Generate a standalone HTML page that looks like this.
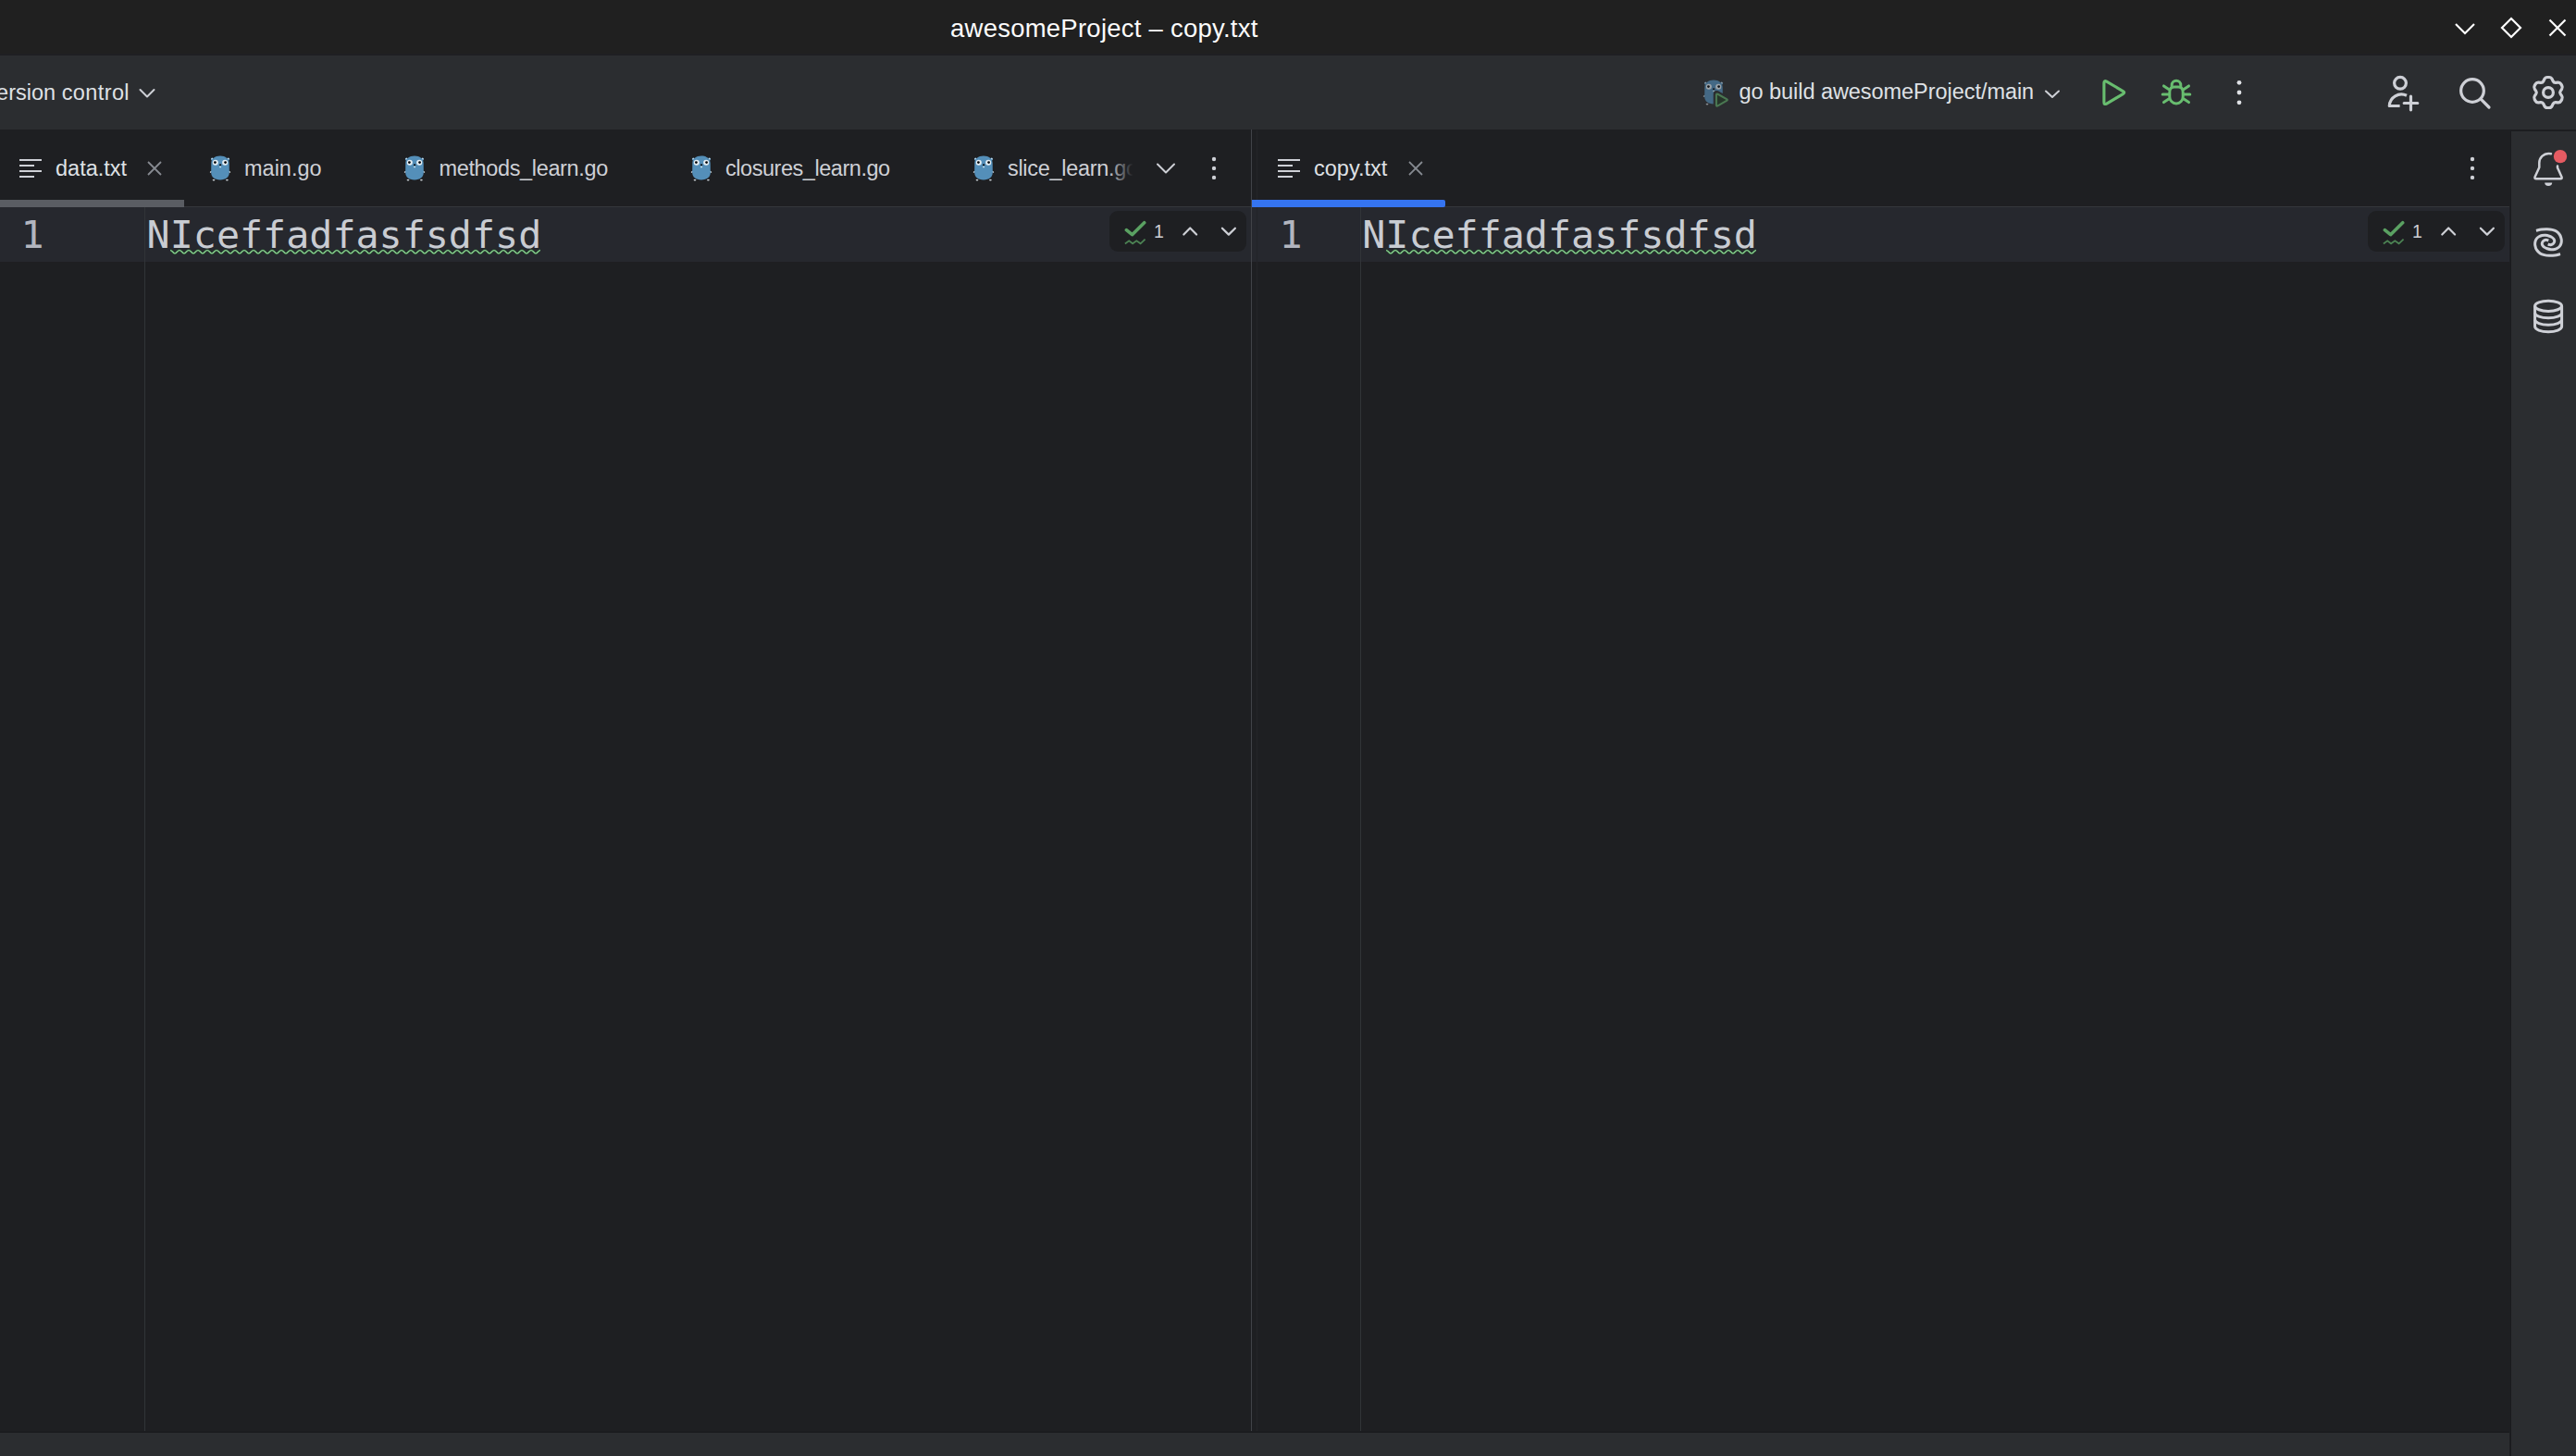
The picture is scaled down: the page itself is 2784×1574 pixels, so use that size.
<!DOCTYPE html>
<html lang="en">
<head>
<meta charset="utf-8">
<title>awesomeProject – copy.txt</title>
<style>
html,body{margin:0;padding:0;background:#1e1f22;}
body{width:2784px;height:1574px;overflow:hidden;background:#1e1f22;position:relative;
  font-family:"Liberation Sans","DejaVu Sans",sans-serif;color:#dfe1e5;}
.abs{position:absolute;}
.t{position:absolute;white-space:pre;line-height:1;}
svg{position:absolute;overflow:visible;}
#title{left:0;top:0;width:2784px;height:58px;background:#202020;}
#titleline{left:0;top:58px;width:2784px;height:2px;background:#1f1f23;}
#toolbar{left:0;top:60px;width:2784px;height:80px;background:#2b2d30;}
#tabline{left:0;top:223px;width:2712px;height:1px;background:#35373b;}
.caret{top:224px;height:59px;background:#26282e;}
#sidebar{left:2714px;top:142px;width:70px;height:1432px;background:#2b2d30;}
#bottom{left:0;top:1549px;width:2712px;height:25px;background:#2b2d30;}
.ui{font-size:23.5px;color:#dfe1e5;}
.tab{font-size:23.5px;color:#ced0d6;}
.code{font-family:"DejaVu Sans Mono","Liberation Mono",monospace;font-size:41.700px;color:#c9ccd2;}
.ln{font-family:"DejaVu Sans Mono","Liberation Mono",monospace;font-size:41.700px;color:#b2b5be;}
.widget{top:228px;width:148px;height:44px;border-radius:9px;background:#1e1f22;}
</style>
</head>
<body>

<!-- window title bar -->
<div id="title" class="abs"></div>
<div id="titleline" class="abs"></div>
<div class="t" id="ttl" style="left:1027px;top:17px;font-size:27.5px;letter-spacing:0.24px;color:#fcfcfc;">awesomeProject – copy.txt</div>
<svg id="winctl" style="left:2640px;top:10px" width="144" height="40" viewBox="2640 10 144 40" fill="none" stroke="#fcfcfc" stroke-width="2.2">
  <path d="M2654 26 L2664 36 L2674 26"/>
  <path d="M2714 20 L2724 30 L2714 40 L2704 30 Z"/>
  <path d="M2755.500 21.500 L2772.500 38.500 M2772.500 21.500 L2755.500 38.500"/>
</svg>

<!-- main toolbar -->
<div id="toolbar" class="abs"></div>
<div class="t ui" id="vc" style="left:-3.900px;top:88.500px;">ersion <span style="letter-spacing:0.4px">control</span></div>
<svg style="left:148px;top:92px" width="24" height="18" viewBox="148 92 24 18" fill="none" stroke="#ced0d6" stroke-width="2" stroke-linecap="round" stroke-linejoin="round">
  <path d="M151.500 97 L159 104.500 L166.500 97"/>
</svg>


<!-- run configuration widget -->
<svg style="left:1840px;top:86px;opacity:0.62" width="24" height="28" viewBox="0 0 24 28"><g><circle cx="3.400" cy="3.900" r="1.500" fill="#5a96c0"/><circle cx="20.600" cy="3.900" r="1.500" fill="#5a96c0"/><circle cx="3.200" cy="3.600" r="0.850" fill="#d5dfe6"/><circle cx="20.800" cy="3.600" r="0.850" fill="#d5dfe6"/><ellipse cx="1.900" cy="17.800" rx="1.250" ry="0.850" transform="rotate(-40 1.900 17.800)" fill="#c3cad0"/><ellipse cx="22.100" cy="17.800" rx="1.250" ry="0.850" transform="rotate(40 22.100 17.800)" fill="#c3cad0"/><ellipse cx="5" cy="26.600" rx="1.350" ry="0.950" fill="#c9cfd4"/><ellipse cx="19.400" cy="26.600" rx="1.350" ry="0.950" fill="#c9cfd4"/><path d="M12 0.600 C6.200 0.600 2.300 3.600 2.300 8.600 L2.200 18.600 C2.200 23.600 6 26.400 12 26.400 C18 26.400 21.800 23.600 21.800 18.600 L21.700 8.600 C21.700 3.600 17.800 0.600 12 0.600 Z" fill="#548fb9"/><circle cx="6.800" cy="7.700" r="3.050" fill="#e4edf3"/><circle cx="17.200" cy="7.700" r="3.050" fill="#e4edf3"/><circle cx="6.400" cy="7.600" r="1.400" fill="#05070a"/><circle cx="17.600" cy="7.600" r="1.400" fill="#05070a"/><ellipse cx="12.100" cy="10.200" rx="1.200" ry="0.950" fill="#0b1118"/><rect x="11.100" y="11.700" width="2" height="1.500" rx="0.600" fill="#cfe6f0"/></g></svg>
<svg style="left:1848px;top:96px" width="24" height="24" viewBox="1848 96 24 24">
  <path d="M1855.200 101.400 L1867.200 108 L1855.200 114.800 Z" fill="#2b2d30" stroke="#2b2d30" stroke-width="7" stroke-linejoin="round"/>
  <path d="M1854.90 102.70 Q1854.90 100.90 1856.47 101.78 L1866.03 107.12 Q1867.60 108.00 1866.03 108.89 L1856.47 114.31 Q1854.90 115.20 1854.90 113.40 Z" fill="#26352a" stroke="#4a7852" stroke-width="2.100" stroke-linejoin="round"/>
</svg>
<div class="t ui" id="runcfg" style="left:1879.500px;top:88px;letter-spacing:-0.05px;">go build awesomeProject/main</div>
<svg style="left:2206px;top:92px" width="24" height="18" viewBox="2206 92 24 18" fill="none" stroke="#ced0d6" stroke-width="2" stroke-linecap="round" stroke-linejoin="round">
  <path d="M2211 98.500 L2218 105 L2225 98.500"/>
</svg>
<!-- run / debug / more -->
<svg style="left:2264px;top:80px" width="40" height="40" viewBox="2264 80 40 40" fill="none" stroke="#68bd6f" stroke-width="3.100" stroke-linejoin="round">
  <path d="M2273.90 89.80 Q2273.90 86.60 2276.70 88.15 L2294.40 98.55 Q2297.10 100.10 2294.40 101.65 L2276.70 112.05 Q2273.90 113.60 2273.90 110.40 Z"/>
</svg>
<svg style="left:2332px;top:80px" width="40" height="40" viewBox="2332 80 40 40" fill="none" stroke="#68bd6f" stroke-width="3" stroke-linecap="round" stroke-linejoin="round">
  <path d="M2344.800 99.500 Q2344.800 94 2350 94 L2354 94 Q2359.200 94 2359.200 99.500 L2359.200 104.700 A7.200 7.200 0 0 1 2344.800 104.700 Z"/>
  <path d="M2347.200 94 L2347.200 92 A4.800 4.800 0 0 1 2356.800 92 L2356.800 94"/>
  <path d="M2338.500 92.900 L2343.800 96.400 M2365.500 92.900 L2360.200 96.400 M2337.200 101.900 L2343.400 101.900 M2366.800 101.900 L2360.600 101.900 M2338.500 110.600 L2343.800 107.100 M2365.500 110.600 L2360.200 107.100"/>
</svg>
<svg style="left:2410px;top:80px" width="20" height="40" viewBox="2410 80 20 40" fill="#dfe1e5">
  <circle cx="2420" cy="89.300" r="2.400"/><circle cx="2420" cy="100" r="2.400"/><circle cx="2420" cy="110.800" r="2.400"/>
</svg>
<!-- code with me / search / settings -->
<svg style="left:2574px;top:78px" width="48" height="48" viewBox="2574 78 48 48" fill="none" stroke="#ced0d6" stroke-width="3.200" stroke-linecap="round" stroke-linejoin="round">
  <circle cx="2594" cy="89.800" r="6.400"/>
  <path d="M2601 103.300 A13.100 13.100 0 0 0 2582.300 114.500 L2593.600 114.500" stroke-linecap="butt"/>
  <path d="M2598.200 111.500 L2612.800 111.500 M2605.500 104.200 L2605.500 118.800"/>
</svg>
<svg style="left:2650px;top:78px" width="48" height="48" viewBox="2650 78 48 48" fill="none" stroke="#ced0d6" stroke-width="3.200" stroke-linecap="round">
  <circle cx="2672" cy="98" r="12.350"/>
  <path d="M2681.200 107.200 L2690 116"/>
</svg>
<svg style="left:2730px;top:76px" width="48" height="48" viewBox="-24 -24 48 48" fill="none" stroke="#ced0d6" stroke-width="3.200" stroke-linejoin="round">
  <path d="M-4.15 -14.50 Q-3.21 -16.49 -1.01 -16.49 L1.01 -16.49 Q3.21 -16.49 4.15 -14.50 L5.19 -12.29 Q6.05 -10.48 8.04 -10.64 L10.49 -10.84 Q12.68 -11.02 13.78 -9.12 L14.78 -7.37 Q15.88 -5.47 14.63 -3.66 L13.24 -1.64 Q12.10 0.00 13.24 1.64 L14.63 3.66 Q15.88 5.47 14.78 7.37 L13.78 9.12 Q12.68 11.02 10.49 10.84 L8.04 10.64 Q6.05 10.48 5.19 12.29 L4.15 14.50 Q3.21 16.49 1.01 16.49 L-1.01 16.49 Q-3.21 16.49 -4.15 14.50 L-5.19 12.29 Q-6.05 10.48 -8.04 10.64 L-10.49 10.84 Q-12.68 11.02 -13.78 9.12 L-14.78 7.37 Q-15.88 5.47 -14.63 3.66 L-13.24 1.64 Q-12.10 0.00 -13.24 -1.64 L-14.63 -3.66 Q-15.88 -5.47 -14.78 -7.37 L-13.78 -9.12 Q-12.68 -11.02 -10.49 -10.84 L-8.04 -10.64 Q-6.05 -10.48 -5.19 -12.29 Z"/>
  <circle cx="0" cy="0" r="5.400"/>
</svg>

<!-- editor area -->
<div class="abs caret" style="left:0;width:1352px;"></div>
<div class="abs caret" style="left:1353px;width:1359px;"></div>
<div id="tabline" class="abs"></div>


<!-- left editor tabs -->
<svg style="left:21px;top:172px" width="24" height="20" viewBox="0 0 24 20"><g fill="#ced0d6"><rect x="0" y="0" width="24" height="2"/><rect x="0" y="6" width="16" height="2"/><rect x="0" y="12" width="24" height="2"/><rect x="0" y="18" width="16" height="2"/></g></svg>
<div class="t tab" id="tab1" style="left:60px;top:171px;color:#dfe1e5;">data.txt</div>
<svg style="left:160px;top:175px" width="14" height="14" viewBox="0 0 14 14"><g fill="none" stroke="#868a91" stroke-width="1.800"><path d="M0 0 L14 14 M14 0 L0 14"/></g></svg>
<div class="abs" style="left:0;top:216px;width:199px;height:8px;background:#5a5d63;"></div>

<svg style="left:226px;top:168px" width="24" height="28" viewBox="0 0 24 28"><g><circle cx="3.400" cy="3.900" r="1.500" fill="#5a96c0"/><circle cx="20.600" cy="3.900" r="1.500" fill="#5a96c0"/><circle cx="3.200" cy="3.600" r="0.850" fill="#d5dfe6"/><circle cx="20.800" cy="3.600" r="0.850" fill="#d5dfe6"/><ellipse cx="1.900" cy="17.800" rx="1.250" ry="0.850" transform="rotate(-40 1.900 17.800)" fill="#c3cad0"/><ellipse cx="22.100" cy="17.800" rx="1.250" ry="0.850" transform="rotate(40 22.100 17.800)" fill="#c3cad0"/><ellipse cx="5" cy="26.600" rx="1.350" ry="0.950" fill="#c9cfd4"/><ellipse cx="19.400" cy="26.600" rx="1.350" ry="0.950" fill="#c9cfd4"/><path d="M12 0.600 C6.200 0.600 2.300 3.600 2.300 8.600 L2.200 18.600 C2.200 23.600 6 26.400 12 26.400 C18 26.400 21.800 23.600 21.800 18.600 L21.700 8.600 C21.700 3.600 17.800 0.600 12 0.600 Z" fill="#548fb9"/><circle cx="6.800" cy="7.700" r="3.050" fill="#e4edf3"/><circle cx="17.200" cy="7.700" r="3.050" fill="#e4edf3"/><circle cx="6.400" cy="7.600" r="1.400" fill="#05070a"/><circle cx="17.600" cy="7.600" r="1.400" fill="#05070a"/><ellipse cx="12.100" cy="10.200" rx="1.200" ry="0.950" fill="#0b1118"/><rect x="11.100" y="11.700" width="2" height="1.500" rx="0.600" fill="#cfe6f0"/></g></svg>
<div class="t tab" id="tab2" style="left:264px;top:171px;">main.go</div>
<svg style="left:436px;top:168px" width="24" height="28" viewBox="0 0 24 28"><g><circle cx="3.400" cy="3.900" r="1.500" fill="#5a96c0"/><circle cx="20.600" cy="3.900" r="1.500" fill="#5a96c0"/><circle cx="3.200" cy="3.600" r="0.850" fill="#d5dfe6"/><circle cx="20.800" cy="3.600" r="0.850" fill="#d5dfe6"/><ellipse cx="1.900" cy="17.800" rx="1.250" ry="0.850" transform="rotate(-40 1.900 17.800)" fill="#c3cad0"/><ellipse cx="22.100" cy="17.800" rx="1.250" ry="0.850" transform="rotate(40 22.100 17.800)" fill="#c3cad0"/><ellipse cx="5" cy="26.600" rx="1.350" ry="0.950" fill="#c9cfd4"/><ellipse cx="19.400" cy="26.600" rx="1.350" ry="0.950" fill="#c9cfd4"/><path d="M12 0.600 C6.200 0.600 2.300 3.600 2.300 8.600 L2.200 18.600 C2.200 23.600 6 26.400 12 26.400 C18 26.400 21.800 23.600 21.800 18.600 L21.700 8.600 C21.700 3.600 17.800 0.600 12 0.600 Z" fill="#548fb9"/><circle cx="6.800" cy="7.700" r="3.050" fill="#e4edf3"/><circle cx="17.200" cy="7.700" r="3.050" fill="#e4edf3"/><circle cx="6.400" cy="7.600" r="1.400" fill="#05070a"/><circle cx="17.600" cy="7.600" r="1.400" fill="#05070a"/><ellipse cx="12.100" cy="10.200" rx="1.200" ry="0.950" fill="#0b1118"/><rect x="11.100" y="11.700" width="2" height="1.500" rx="0.600" fill="#cfe6f0"/></g></svg>
<div class="t tab" id="tab3" style="left:474.500px;top:171px;letter-spacing:-0.36px;">methods_learn.go</div>
<svg style="left:746px;top:168px" width="24" height="28" viewBox="0 0 24 28"><g><circle cx="3.400" cy="3.900" r="1.500" fill="#5a96c0"/><circle cx="20.600" cy="3.900" r="1.500" fill="#5a96c0"/><circle cx="3.200" cy="3.600" r="0.850" fill="#d5dfe6"/><circle cx="20.800" cy="3.600" r="0.850" fill="#d5dfe6"/><ellipse cx="1.900" cy="17.800" rx="1.250" ry="0.850" transform="rotate(-40 1.900 17.800)" fill="#c3cad0"/><ellipse cx="22.100" cy="17.800" rx="1.250" ry="0.850" transform="rotate(40 22.100 17.800)" fill="#c3cad0"/><ellipse cx="5" cy="26.600" rx="1.350" ry="0.950" fill="#c9cfd4"/><ellipse cx="19.400" cy="26.600" rx="1.350" ry="0.950" fill="#c9cfd4"/><path d="M12 0.600 C6.200 0.600 2.300 3.600 2.300 8.600 L2.200 18.600 C2.200 23.600 6 26.400 12 26.400 C18 26.400 21.800 23.600 21.800 18.600 L21.700 8.600 C21.700 3.600 17.800 0.600 12 0.600 Z" fill="#548fb9"/><circle cx="6.800" cy="7.700" r="3.050" fill="#e4edf3"/><circle cx="17.200" cy="7.700" r="3.050" fill="#e4edf3"/><circle cx="6.400" cy="7.600" r="1.400" fill="#05070a"/><circle cx="17.600" cy="7.600" r="1.400" fill="#05070a"/><ellipse cx="12.100" cy="10.200" rx="1.200" ry="0.950" fill="#0b1118"/><rect x="11.100" y="11.700" width="2" height="1.500" rx="0.600" fill="#cfe6f0"/></g></svg>
<div class="t tab" id="tab4" style="left:784px;top:171px;letter-spacing:-0.46px;">closures_learn.go</div>
<svg style="left:1051px;top:168px" width="24" height="28" viewBox="0 0 24 28"><g><circle cx="3.400" cy="3.900" r="1.500" fill="#5a96c0"/><circle cx="20.600" cy="3.900" r="1.500" fill="#5a96c0"/><circle cx="3.200" cy="3.600" r="0.850" fill="#d5dfe6"/><circle cx="20.800" cy="3.600" r="0.850" fill="#d5dfe6"/><ellipse cx="1.900" cy="17.800" rx="1.250" ry="0.850" transform="rotate(-40 1.900 17.800)" fill="#c3cad0"/><ellipse cx="22.100" cy="17.800" rx="1.250" ry="0.850" transform="rotate(40 22.100 17.800)" fill="#c3cad0"/><ellipse cx="5" cy="26.600" rx="1.350" ry="0.950" fill="#c9cfd4"/><ellipse cx="19.400" cy="26.600" rx="1.350" ry="0.950" fill="#c9cfd4"/><path d="M12 0.600 C6.200 0.600 2.300 3.600 2.300 8.600 L2.200 18.600 C2.200 23.600 6 26.400 12 26.400 C18 26.400 21.800 23.600 21.800 18.600 L21.700 8.600 C21.700 3.600 17.800 0.600 12 0.600 Z" fill="#548fb9"/><circle cx="6.800" cy="7.700" r="3.050" fill="#e4edf3"/><circle cx="17.200" cy="7.700" r="3.050" fill="#e4edf3"/><circle cx="6.400" cy="7.600" r="1.400" fill="#05070a"/><circle cx="17.600" cy="7.600" r="1.400" fill="#05070a"/><ellipse cx="12.100" cy="10.200" rx="1.200" ry="0.950" fill="#0b1118"/><rect x="11.100" y="11.700" width="2" height="1.500" rx="0.600" fill="#cfe6f0"/></g></svg>
<div class="t tab" id="tab5" style="left:1089px;top:171px;letter-spacing:-0.3px;">slice_learn.go</div>
<div class="abs" style="left:1198px;top:160px;width:28px;height:50px;background:linear-gradient(to right,rgba(30,31,34,0),#1e1f22 95%);"></div>
<div class="abs" style="left:1224px;top:150px;width:128px;height:70px;background:#1e1f22;"></div>
<svg style="left:1246px;top:172px" width="28" height="20" viewBox="1246 172 28 20" fill="none" stroke="#ced0d6" stroke-width="2" stroke-linecap="round" stroke-linejoin="round">
  <path d="M1251 177.500 L1260 186.500 L1269 177.500"/>
</svg>
<svg style="left:1311.800px;top:172.200px" width="6" height="24" viewBox="0 0 6 24"><g fill="#ced0d6"><circle cx="0" cy="0" r="2.200"/><circle cx="0" cy="9.900" r="2.200"/><circle cx="0" cy="19.900" r="2.200"/></g></svg>

<!-- split divider -->
<div class="abs" style="left:1352px;top:140px;width:1px;height:1407px;background:#414348;"></div>
<div class="abs" style="left:1358px;top:141px;width:1px;height:1406px;background:#232428;"></div>

<!-- right editor tabs -->
<svg style="left:1381px;top:172px" width="24" height="20" viewBox="0 0 24 20"><g fill="#ced0d6"><rect x="0" y="0" width="24" height="2"/><rect x="0" y="6" width="16" height="2"/><rect x="0" y="12" width="24" height="2"/><rect x="0" y="18" width="16" height="2"/></g></svg>
<div class="t tab" id="tab6" style="left:1420px;top:171px;color:#dfe1e5;">copy.txt</div>
<svg style="left:1523px;top:175px" width="14" height="14" viewBox="0 0 14 14"><g fill="none" stroke="#868a91" stroke-width="1.800"><path d="M0 0 L14 14 M14 0 L0 14"/></g></svg>
<div class="abs" style="left:1353px;top:216px;width:209px;height:8px;background:#3574f0;border-radius:0 2px 2px 0;"></div>
<svg style="left:2672px;top:172.200px" width="6" height="24" viewBox="0 0 6 24"><g fill="#ced0d6"><circle cx="0" cy="0" r="2.200"/><circle cx="0" cy="9.900" r="2.200"/><circle cx="0" cy="19.900" r="2.200"/></g></svg>

<!-- left editor -->
<div class="abs" style="left:156px;top:224px;width:1px;height:1325px;background:#313438;"></div>
<div class="t ln" id="ln1" style="left:22.400px;top:233.200px;">1</div>
<div class="t code" id="code1" style="left:158.600px;top:233.200px;">NIceffadfasfsdfsd</div>
<svg class="sq" style="left:184px;top:268px" width="399.500" height="8" viewBox="0 0 399.500 8" fill="none" stroke="#8cd493" stroke-width="1.350"><path d="M0 2.6q1.2 0 2.6 1.6q1.4 2.1 2.4 1.6q1 .5 2.4-1.6q1.4-1.6 2.6-1.6q1.2 0 2.6 1.6q1.4 2.1 2.4 1.6q1 .5 2.4-1.6q1.4-1.6 2.6-1.6q1.2 0 2.6 1.6q1.4 2.1 2.4 1.6q1 .5 2.4-1.6q1.4-1.6 2.6-1.6q1.2 0 2.6 1.6q1.4 2.1 2.4 1.6q1 .5 2.4-1.6q1.4-1.6 2.6-1.6q1.2 0 2.6 1.6q1.4 2.1 2.4 1.6q1 .5 2.4-1.6q1.4-1.6 2.6-1.6q1.2 0 2.6 1.6q1.4 2.1 2.4 1.6q1 .5 2.4-1.6q1.4-1.6 2.6-1.6q1.2 0 2.6 1.6q1.4 2.1 2.4 1.6q1 .5 2.4-1.6q1.4-1.6 2.6-1.6q1.2 0 2.6 1.6q1.4 2.1 2.4 1.6q1 .5 2.4-1.6q1.4-1.6 2.6-1.6q1.2 0 2.6 1.6q1.4 2.1 2.4 1.6q1 .5 2.4-1.6q1.4-1.6 2.6-1.6q1.2 0 2.6 1.6q1.4 2.1 2.4 1.6q1 .5 2.4-1.6q1.4-1.6 2.6-1.6q1.2 0 2.6 1.6q1.4 2.1 2.4 1.6q1 .5 2.4-1.6q1.4-1.6 2.6-1.6q1.2 0 2.6 1.6q1.4 2.1 2.4 1.6q1 .5 2.4-1.6q1.4-1.6 2.6-1.6q1.2 0 2.6 1.6q1.4 2.1 2.4 1.6q1 .5 2.4-1.6q1.4-1.6 2.6-1.6q1.2 0 2.6 1.6q1.4 2.1 2.4 1.6q1 .5 2.4-1.6q1.4-1.6 2.6-1.6q1.2 0 2.6 1.6q1.4 2.1 2.4 1.6q1 .5 2.4-1.6q1.4-1.6 2.6-1.6q1.2 0 2.6 1.6q1.4 2.1 2.4 1.6q1 .5 2.4-1.6q1.4-1.6 2.6-1.6q1.2 0 2.6 1.6q1.4 2.1 2.4 1.6q1 .5 2.4-1.6q1.4-1.6 2.6-1.6q1.2 0 2.6 1.6q1.4 2.1 2.4 1.6q1 .5 2.4-1.6q1.4-1.6 2.6-1.6q1.2 0 2.6 1.6q1.4 2.1 2.4 1.6q1 .5 2.4-1.6q1.4-1.6 2.6-1.6q1.2 0 2.6 1.6q1.4 2.1 2.4 1.6q1 .5 2.4-1.6q1.4-1.6 2.6-1.6q1.2 0 2.6 1.6q1.4 2.1 2.4 1.6q1 .5 2.4-1.6q1.4-1.6 2.6-1.6q1.2 0 2.6 1.6q1.4 2.1 2.4 1.6q1 .5 2.4-1.6q1.4-1.6 2.6-1.6q1.2 0 2.6 1.6q1.4 2.1 2.4 1.6q1 .5 2.4-1.6q1.4-1.6 2.6-1.6q1.2 0 2.6 1.6q1.4 2.1 2.4 1.6q1 .5 2.4-1.6q1.4-1.6 2.6-1.6q1.2 0 2.6 1.6q1.4 2.1 2.4 1.6q1 .5 2.4-1.6q1.4-1.6 2.6-1.6q1.2 0 2.6 1.6q1.4 2.1 2.4 1.6q1 .5 2.4-1.6q1.4-1.6 2.6-1.6q1.2 0 2.6 1.6q1.4 2.1 2.4 1.6q1 .5 2.4-1.6q1.4-1.6 2.6-1.6q1.2 0 2.6 1.6q1.4 2.1 2.4 1.6q1 .5 2.4-1.6q1.4-1.6 2.6-1.6q1.2 0 2.6 1.6q1.4 2.1 2.4 1.6q1 .5 2.4-1.6q1.4-1.6 2.6-1.6q1.2 0 2.6 1.6q1.4 2.1 2.4 1.6q1 .5 2.4-1.6q1.4-1.6 2.6-1.6q1.2 0 2.6 1.6q1.4 2.1 2.4 1.6q1 .5 2.4-1.6q1.4-1.6 2.6-1.6q1.2 0 2.6 1.6q1.4 2.1 2.4 1.6q1 .5 2.4-1.6q1.4-1.6 2.6-1.6q1.2 0 2.6 1.6q1.4 2.1 2.4 1.6q1 .5 2.4-1.6q1.4-1.6 2.6-1.6q1.2 0 2.6 1.6q1.4 2.1 2.4 1.6q1 .5 2.4-1.6q1.4-1.6 2.6-1.6q1.2 0 2.6 1.6q1.4 2.1 2.4 1.6q1 .5 2.4-1.6q1.4-1.6 2.6-1.6q1.2 0 2.6 1.6q1.4 2.1 2.4 1.6q1 .5 2.4-1.6q1.4-1.6 2.6-1.6q1.2 0 2.6 1.6q1.4 2.1 2.4 1.6q1 .5 2.4-1.6q1.4-1.6 2.6-1.6q1.2 0 2.6 1.6q1.4 2.1 2.4 1.6q1 .5 2.4-1.6q1.4-1.6 2.6-1.6q1.2 0 2.6 1.6q1.4 2.1 2.4 1.6q1 .5 2.4-1.6q1.4-1.6 2.6-1.6q1.2 0 2.6 1.6q1.4 2.1 2.4 1.6q1 .5 2.4-1.6q1.4-1.6 2.6-1.6" stroke="#245a2e" stroke-width="2.700" opacity="0.550"/><path d="M0 2.6q1.2 0 2.6 1.6q1.4 2.1 2.4 1.6q1 .5 2.4-1.6q1.4-1.6 2.6-1.6q1.2 0 2.6 1.6q1.4 2.1 2.4 1.6q1 .5 2.4-1.6q1.4-1.6 2.6-1.6q1.2 0 2.6 1.6q1.4 2.1 2.4 1.6q1 .5 2.4-1.6q1.4-1.6 2.6-1.6q1.2 0 2.6 1.6q1.4 2.1 2.4 1.6q1 .5 2.4-1.6q1.4-1.6 2.6-1.6q1.2 0 2.6 1.6q1.4 2.1 2.4 1.6q1 .5 2.4-1.6q1.4-1.6 2.6-1.6q1.2 0 2.6 1.6q1.4 2.1 2.4 1.6q1 .5 2.4-1.6q1.4-1.6 2.6-1.6q1.2 0 2.6 1.6q1.4 2.1 2.4 1.6q1 .5 2.4-1.6q1.4-1.6 2.6-1.6q1.2 0 2.6 1.6q1.4 2.1 2.4 1.6q1 .5 2.4-1.6q1.4-1.6 2.6-1.6q1.2 0 2.6 1.6q1.4 2.1 2.4 1.6q1 .5 2.4-1.6q1.4-1.6 2.6-1.6q1.2 0 2.6 1.6q1.4 2.1 2.4 1.6q1 .5 2.4-1.6q1.4-1.6 2.6-1.6q1.2 0 2.6 1.6q1.4 2.1 2.4 1.6q1 .5 2.4-1.6q1.4-1.6 2.6-1.6q1.2 0 2.6 1.6q1.4 2.1 2.4 1.6q1 .5 2.4-1.6q1.4-1.6 2.6-1.6q1.2 0 2.6 1.6q1.4 2.1 2.4 1.6q1 .5 2.4-1.6q1.4-1.6 2.6-1.6q1.2 0 2.6 1.6q1.4 2.1 2.4 1.6q1 .5 2.4-1.6q1.4-1.6 2.6-1.6q1.2 0 2.6 1.6q1.4 2.1 2.4 1.6q1 .5 2.4-1.6q1.4-1.6 2.6-1.6q1.2 0 2.6 1.6q1.4 2.1 2.4 1.6q1 .5 2.4-1.6q1.4-1.6 2.6-1.6q1.2 0 2.6 1.6q1.4 2.1 2.4 1.6q1 .5 2.4-1.6q1.4-1.6 2.6-1.6q1.2 0 2.6 1.6q1.4 2.1 2.4 1.6q1 .5 2.4-1.6q1.4-1.6 2.6-1.6q1.2 0 2.6 1.6q1.4 2.1 2.4 1.6q1 .5 2.4-1.6q1.4-1.6 2.6-1.6q1.2 0 2.6 1.6q1.4 2.1 2.4 1.6q1 .5 2.4-1.6q1.4-1.6 2.6-1.6q1.2 0 2.6 1.6q1.4 2.1 2.4 1.6q1 .5 2.4-1.6q1.4-1.6 2.6-1.6q1.2 0 2.6 1.6q1.4 2.1 2.4 1.6q1 .5 2.4-1.6q1.4-1.6 2.6-1.6q1.2 0 2.6 1.6q1.4 2.1 2.4 1.6q1 .5 2.4-1.6q1.4-1.6 2.6-1.6q1.2 0 2.6 1.6q1.4 2.1 2.4 1.6q1 .5 2.4-1.6q1.4-1.6 2.6-1.6q1.2 0 2.6 1.6q1.4 2.1 2.4 1.6q1 .5 2.4-1.6q1.4-1.6 2.6-1.6q1.2 0 2.6 1.6q1.4 2.1 2.4 1.6q1 .5 2.4-1.6q1.4-1.6 2.6-1.6q1.2 0 2.6 1.6q1.4 2.1 2.4 1.6q1 .5 2.4-1.6q1.4-1.6 2.6-1.6q1.2 0 2.6 1.6q1.4 2.1 2.4 1.6q1 .5 2.4-1.6q1.4-1.6 2.6-1.6q1.2 0 2.6 1.6q1.4 2.1 2.4 1.6q1 .5 2.4-1.6q1.4-1.6 2.6-1.6q1.2 0 2.6 1.6q1.4 2.1 2.4 1.6q1 .5 2.4-1.6q1.4-1.6 2.6-1.6q1.2 0 2.6 1.6q1.4 2.1 2.4 1.6q1 .5 2.4-1.6q1.4-1.6 2.6-1.6q1.2 0 2.6 1.6q1.4 2.1 2.4 1.6q1 .5 2.4-1.6q1.4-1.6 2.6-1.6q1.2 0 2.6 1.6q1.4 2.1 2.4 1.6q1 .5 2.4-1.6q1.4-1.6 2.6-1.6q1.2 0 2.6 1.6q1.4 2.1 2.4 1.6q1 .5 2.4-1.6q1.4-1.6 2.6-1.6q1.2 0 2.6 1.6q1.4 2.1 2.4 1.6q1 .5 2.4-1.6q1.4-1.6 2.6-1.6q1.2 0 2.6 1.6q1.4 2.1 2.4 1.6q1 .5 2.4-1.6q1.4-1.6 2.6-1.6q1.2 0 2.6 1.6q1.4 2.1 2.4 1.6q1 .5 2.4-1.6q1.4-1.6 2.6-1.6q1.2 0 2.6 1.6q1.4 2.1 2.4 1.6q1 .5 2.4-1.6q1.4-1.6 2.6-1.6q1.2 0 2.6 1.6q1.4 2.1 2.4 1.6q1 .5 2.4-1.6q1.4-1.6 2.6-1.6q1.2 0 2.6 1.6q1.4 2.1 2.4 1.6q1 .5 2.4-1.6q1.4-1.6 2.6-1.6"/></svg>
<div class="abs widget" style="left:1199px;"></div>
<svg style="left:1199px;top:228px" width="148" height="44" viewBox="0 0 148 44"><g><path d="M18.400 20.600 L24.600 25.700 L37.700 12.700" fill="none" stroke="#5aa162" stroke-width="3.600" stroke-linecap="round" stroke-linejoin="round"/><path d="M16.900 35.500 L21.200 32.300 L25.100 35.300 L29.300 32.300 L33.600 35.300 L38.600 30.700" fill="none" stroke="#4c8354" stroke-width="1.800" stroke-linejoin="miter"/><path d="M80.300 25.500 L87.200 18.500 L94.100 25.500" fill="none" stroke="#ced0d6" stroke-width="2.200" stroke-linecap="round" stroke-linejoin="round"/><path d="M121.900 18.700 L128.900 25.600 L135.900 18.700" fill="none" stroke="#ced0d6" stroke-width="2.200" stroke-linecap="round" stroke-linejoin="round"/></g></svg>
<div class="t" id="cnt1" style="left:1247px;top:241px;font-size:19.500px;color:#ced0d6;">1</div>

<!-- right editor -->
<div class="abs" style="left:1470px;top:224px;width:1px;height:1325px;background:#313438;"></div>
<div class="t ln" id="ln2" style="left:1382.600px;top:233.200px;">1</div>
<div class="t code" id="code2" style="left:1472.200px;top:233.200px;">NIceffadfasfsdfsd</div>
<svg class="sq" style="left:1497.600px;top:268px" width="399.500" height="8" viewBox="0 0 399.500 8" fill="none" stroke="#8cd493" stroke-width="1.350"><path d="M0 2.6q1.2 0 2.6 1.6q1.4 2.1 2.4 1.6q1 .5 2.4-1.6q1.4-1.6 2.6-1.6q1.2 0 2.6 1.6q1.4 2.1 2.4 1.6q1 .5 2.4-1.6q1.4-1.6 2.6-1.6q1.2 0 2.6 1.6q1.4 2.1 2.4 1.6q1 .5 2.4-1.6q1.4-1.6 2.6-1.6q1.2 0 2.6 1.6q1.4 2.1 2.4 1.6q1 .5 2.4-1.6q1.4-1.6 2.6-1.6q1.2 0 2.6 1.6q1.4 2.1 2.4 1.6q1 .5 2.4-1.6q1.4-1.6 2.6-1.6q1.2 0 2.6 1.6q1.4 2.1 2.4 1.6q1 .5 2.4-1.6q1.4-1.6 2.6-1.6q1.2 0 2.6 1.6q1.4 2.1 2.4 1.6q1 .5 2.4-1.6q1.4-1.6 2.6-1.6q1.2 0 2.6 1.6q1.4 2.1 2.4 1.6q1 .5 2.4-1.6q1.4-1.6 2.6-1.6q1.2 0 2.6 1.6q1.4 2.1 2.4 1.6q1 .5 2.4-1.6q1.4-1.6 2.6-1.6q1.2 0 2.6 1.6q1.4 2.1 2.4 1.6q1 .5 2.4-1.6q1.4-1.6 2.6-1.6q1.2 0 2.6 1.6q1.4 2.1 2.4 1.6q1 .5 2.4-1.6q1.4-1.6 2.6-1.6q1.2 0 2.6 1.6q1.4 2.1 2.4 1.6q1 .5 2.4-1.6q1.4-1.6 2.6-1.6q1.2 0 2.6 1.6q1.4 2.1 2.4 1.6q1 .5 2.4-1.6q1.4-1.6 2.6-1.6q1.2 0 2.6 1.6q1.4 2.1 2.4 1.6q1 .5 2.4-1.6q1.4-1.6 2.6-1.6q1.2 0 2.6 1.6q1.4 2.1 2.4 1.6q1 .5 2.4-1.6q1.4-1.6 2.6-1.6q1.2 0 2.6 1.6q1.4 2.1 2.4 1.6q1 .5 2.4-1.6q1.4-1.6 2.6-1.6q1.2 0 2.6 1.6q1.4 2.1 2.4 1.6q1 .5 2.4-1.6q1.4-1.6 2.6-1.6q1.2 0 2.6 1.6q1.4 2.1 2.4 1.6q1 .5 2.4-1.6q1.4-1.6 2.6-1.6q1.2 0 2.6 1.6q1.4 2.1 2.4 1.6q1 .5 2.4-1.6q1.4-1.6 2.6-1.6q1.2 0 2.6 1.6q1.4 2.1 2.4 1.6q1 .5 2.4-1.6q1.4-1.6 2.6-1.6q1.2 0 2.6 1.6q1.4 2.1 2.4 1.6q1 .5 2.4-1.6q1.4-1.6 2.6-1.6q1.2 0 2.6 1.6q1.4 2.1 2.4 1.6q1 .5 2.4-1.6q1.4-1.6 2.6-1.6q1.2 0 2.6 1.6q1.4 2.1 2.4 1.6q1 .5 2.4-1.6q1.4-1.6 2.6-1.6q1.2 0 2.6 1.6q1.4 2.1 2.4 1.6q1 .5 2.4-1.6q1.4-1.6 2.6-1.6q1.2 0 2.6 1.6q1.4 2.1 2.4 1.6q1 .5 2.4-1.6q1.4-1.6 2.6-1.6q1.2 0 2.6 1.6q1.4 2.1 2.4 1.6q1 .5 2.4-1.6q1.4-1.6 2.6-1.6q1.2 0 2.6 1.6q1.4 2.1 2.4 1.6q1 .5 2.4-1.6q1.4-1.6 2.6-1.6q1.2 0 2.6 1.6q1.4 2.1 2.4 1.6q1 .5 2.4-1.6q1.4-1.6 2.6-1.6q1.2 0 2.6 1.6q1.4 2.1 2.4 1.6q1 .5 2.4-1.6q1.4-1.6 2.6-1.6q1.2 0 2.6 1.6q1.4 2.1 2.4 1.6q1 .5 2.4-1.6q1.4-1.6 2.6-1.6q1.2 0 2.6 1.6q1.4 2.1 2.4 1.6q1 .5 2.4-1.6q1.4-1.6 2.6-1.6q1.2 0 2.6 1.6q1.4 2.1 2.4 1.6q1 .5 2.4-1.6q1.4-1.6 2.6-1.6q1.2 0 2.6 1.6q1.4 2.1 2.4 1.6q1 .5 2.4-1.6q1.4-1.6 2.6-1.6q1.2 0 2.6 1.6q1.4 2.1 2.4 1.6q1 .5 2.4-1.6q1.4-1.6 2.6-1.6q1.2 0 2.6 1.6q1.4 2.1 2.4 1.6q1 .5 2.4-1.6q1.4-1.6 2.6-1.6q1.2 0 2.6 1.6q1.4 2.1 2.4 1.6q1 .5 2.4-1.6q1.4-1.6 2.6-1.6q1.2 0 2.6 1.6q1.4 2.1 2.4 1.6q1 .5 2.4-1.6q1.4-1.6 2.6-1.6q1.2 0 2.6 1.6q1.4 2.1 2.4 1.6q1 .5 2.4-1.6q1.4-1.6 2.6-1.6q1.2 0 2.6 1.6q1.4 2.1 2.4 1.6q1 .5 2.4-1.6q1.4-1.6 2.6-1.6q1.2 0 2.6 1.6q1.4 2.1 2.4 1.6q1 .5 2.4-1.6q1.4-1.6 2.6-1.6" stroke="#245a2e" stroke-width="2.700" opacity="0.550"/><path d="M0 2.6q1.2 0 2.6 1.6q1.4 2.1 2.4 1.6q1 .5 2.4-1.6q1.4-1.6 2.6-1.6q1.2 0 2.6 1.6q1.4 2.1 2.4 1.6q1 .5 2.4-1.6q1.4-1.6 2.6-1.6q1.2 0 2.6 1.6q1.4 2.1 2.4 1.6q1 .5 2.4-1.6q1.4-1.6 2.6-1.6q1.2 0 2.6 1.6q1.4 2.1 2.4 1.6q1 .5 2.4-1.6q1.4-1.6 2.6-1.6q1.2 0 2.6 1.6q1.4 2.1 2.4 1.6q1 .5 2.4-1.6q1.4-1.6 2.6-1.6q1.2 0 2.6 1.6q1.4 2.1 2.4 1.6q1 .5 2.4-1.6q1.4-1.6 2.6-1.6q1.2 0 2.6 1.6q1.4 2.1 2.4 1.6q1 .5 2.4-1.6q1.4-1.6 2.6-1.6q1.2 0 2.6 1.6q1.4 2.1 2.4 1.6q1 .5 2.4-1.6q1.4-1.6 2.6-1.6q1.2 0 2.6 1.6q1.4 2.1 2.4 1.6q1 .5 2.4-1.6q1.4-1.6 2.6-1.6q1.2 0 2.6 1.6q1.4 2.1 2.4 1.6q1 .5 2.4-1.6q1.4-1.6 2.6-1.6q1.2 0 2.6 1.6q1.4 2.1 2.4 1.6q1 .5 2.4-1.6q1.4-1.6 2.6-1.6q1.2 0 2.6 1.6q1.4 2.1 2.4 1.6q1 .5 2.4-1.6q1.4-1.6 2.6-1.6q1.2 0 2.6 1.6q1.4 2.1 2.4 1.6q1 .5 2.4-1.6q1.4-1.6 2.6-1.6q1.2 0 2.6 1.6q1.4 2.1 2.4 1.6q1 .5 2.4-1.6q1.4-1.6 2.6-1.6q1.2 0 2.6 1.6q1.4 2.1 2.4 1.6q1 .5 2.4-1.6q1.4-1.6 2.6-1.6q1.2 0 2.6 1.6q1.4 2.1 2.4 1.6q1 .5 2.4-1.6q1.4-1.6 2.6-1.6q1.2 0 2.6 1.6q1.4 2.1 2.4 1.6q1 .5 2.4-1.6q1.4-1.6 2.6-1.6q1.2 0 2.6 1.6q1.4 2.1 2.4 1.6q1 .5 2.4-1.6q1.4-1.6 2.6-1.6q1.2 0 2.6 1.6q1.4 2.1 2.4 1.6q1 .5 2.4-1.6q1.4-1.6 2.6-1.6q1.2 0 2.6 1.6q1.4 2.1 2.4 1.6q1 .5 2.4-1.6q1.4-1.6 2.6-1.6q1.2 0 2.6 1.6q1.4 2.1 2.4 1.6q1 .5 2.4-1.6q1.4-1.6 2.6-1.6q1.2 0 2.6 1.6q1.4 2.1 2.4 1.6q1 .5 2.4-1.6q1.4-1.6 2.6-1.6q1.2 0 2.6 1.6q1.4 2.1 2.4 1.6q1 .5 2.4-1.6q1.4-1.6 2.6-1.6q1.2 0 2.6 1.6q1.4 2.1 2.4 1.6q1 .5 2.4-1.6q1.4-1.6 2.6-1.6q1.2 0 2.6 1.6q1.4 2.1 2.4 1.6q1 .5 2.4-1.6q1.4-1.6 2.6-1.6q1.2 0 2.6 1.6q1.4 2.1 2.4 1.6q1 .5 2.4-1.6q1.4-1.6 2.6-1.6q1.2 0 2.6 1.6q1.4 2.1 2.4 1.6q1 .5 2.4-1.6q1.4-1.6 2.6-1.6q1.2 0 2.6 1.6q1.4 2.1 2.4 1.6q1 .5 2.4-1.6q1.4-1.6 2.6-1.6q1.2 0 2.6 1.6q1.4 2.1 2.4 1.6q1 .5 2.4-1.6q1.4-1.6 2.6-1.6q1.2 0 2.6 1.6q1.4 2.1 2.4 1.6q1 .5 2.4-1.6q1.4-1.6 2.6-1.6q1.2 0 2.6 1.6q1.4 2.1 2.4 1.6q1 .5 2.4-1.6q1.4-1.6 2.6-1.6q1.2 0 2.6 1.6q1.4 2.1 2.4 1.6q1 .5 2.4-1.6q1.4-1.6 2.6-1.6q1.2 0 2.6 1.6q1.4 2.1 2.4 1.6q1 .5 2.4-1.6q1.4-1.6 2.6-1.6q1.2 0 2.6 1.6q1.4 2.1 2.4 1.6q1 .5 2.4-1.6q1.4-1.6 2.6-1.6q1.2 0 2.6 1.6q1.4 2.1 2.4 1.6q1 .5 2.4-1.6q1.4-1.6 2.6-1.6q1.2 0 2.6 1.6q1.4 2.1 2.4 1.6q1 .5 2.4-1.6q1.4-1.6 2.6-1.6q1.2 0 2.6 1.6q1.4 2.1 2.4 1.6q1 .5 2.4-1.6q1.4-1.6 2.6-1.6q1.2 0 2.6 1.6q1.4 2.1 2.4 1.6q1 .5 2.4-1.6q1.4-1.6 2.6-1.6q1.2 0 2.6 1.6q1.4 2.1 2.4 1.6q1 .5 2.4-1.6q1.4-1.6 2.6-1.6q1.2 0 2.6 1.6q1.4 2.1 2.4 1.6q1 .5 2.4-1.6q1.4-1.6 2.6-1.6"/></svg>
<div class="abs widget" style="left:2559px;"></div>
<svg style="left:2559px;top:228px" width="148" height="44" viewBox="0 0 148 44"><g><path d="M18.400 20.600 L24.600 25.700 L37.700 12.700" fill="none" stroke="#5aa162" stroke-width="3.600" stroke-linecap="round" stroke-linejoin="round"/><path d="M16.900 35.500 L21.200 32.300 L25.100 35.300 L29.300 32.300 L33.600 35.300 L38.600 30.700" fill="none" stroke="#4c8354" stroke-width="1.800" stroke-linejoin="miter"/><path d="M80.300 25.500 L87.200 18.500 L94.100 25.500" fill="none" stroke="#ced0d6" stroke-width="2.200" stroke-linecap="round" stroke-linejoin="round"/><path d="M121.900 18.700 L128.900 25.600 L135.900 18.700" fill="none" stroke="#ced0d6" stroke-width="2.200" stroke-linecap="round" stroke-linejoin="round"/></g></svg>
<div class="t" id="cnt2" style="left:2607px;top:241px;font-size:19.500px;color:#ced0d6;">1</div>

<!-- right tool stripe + bottom bar -->
<div id="sidebar" class="abs"></div>
<div id="bottom" class="abs"></div>
<div class="abs" style="left:0;top:1547px;width:2712px;height:2px;background:#1b1c1f;"></div>
<div class="abs" style="left:2713px;top:141px;width:1px;height:1433px;background:#1a1b1e;"></div>
<div class="abs" style="left:2713px;top:140px;width:71px;height:2px;background:#1c1d20;"></div>

<!-- right tool stripe icons -->
<svg style="left:2730px;top:156px" width="54" height="50" viewBox="2730 156 54 50" fill="none" stroke="#ced0d6" stroke-width="2.500" stroke-linecap="round" stroke-linejoin="round">
  <path d="M2757 166.300 Q2755.800 166 2754.500 166 A10.200 10.200 0 0 0 2744.300 176.200 L2744.300 180.900 L2739.600 191.200 Q2738.900 193.200 2741 193.200 L2767.200 193.200 Q2769.300 193.200 2768.500 191.200 L2764 181.300 L2764 179.400"/>
  <path d="M2750.200 197.600 L2758.200 197.600 A4 3.400 0 0 1 2750.200 197.600 Z" fill="#ced0d6" stroke="none"/>
  <circle cx="2767" cy="169.100" r="7.200" fill="#e55b62" stroke="none"/>
</svg>
<svg style="left:2730px;top:238px" width="48" height="48" viewBox="-24 -24 48 48" fill="none" stroke="#ced0d6" stroke-width="3.100" stroke-linecap="butt">
  <g transform="scale(0.96)"><path d="M-13.600 -13.200 C-12.580 -13.430 -9.570 -14.320 -7.500 -14.600 C-5.430 -14.880 -3.200 -14.970 -1.200 -14.900 C0.800 -14.830 2.780 -14.620 4.500 -14.200 C6.220 -13.780 7.680 -13.350 9.100 -12.400 C10.520 -11.450 12.050 -10.020 13 -8.500 C13.950 -6.980 14.530 -4.880 14.800 -3.300 C15.070 -1.720 14.900 -0.270 14.600 1 C14.300 2.270 13.720 3.380 13 4.300 C12.280 5.220 11.300 5.920 10.300 6.500 C9.300 7.080 8.220 7.550 7 7.800 C5.780 8.050 4.370 8.130 3 8 C1.630 7.870 0.020 7.400 -1.200 7 C-2.420 6.600 -3.470 6.150 -4.300 5.600 C-5.130 5.050 -5.750 4.330 -6.200 3.700 C-6.650 3.070 -6.930 2.450 -7 1.800 C-7.070 1.150 -6.870 0.380 -6.600 -0.200 C-6.330 -0.780 -5.920 -1.300 -5.400 -1.700 C-4.880 -2.100 -4.150 -2.430 -3.500 -2.600 C-2.850 -2.770 -2.130 -2.800 -1.500 -2.700 C-0.870 -2.600 0 -2.120 0.300 -2"/>
  <path d="M13.600 13.200 C12.580 13.430 9.570 14.320 7.500 14.600 C5.430 14.880 3.200 14.970 1.200 14.900 C-0.800 14.830 -2.780 14.620 -4.500 14.200 C-6.220 13.780 -7.680 13.350 -9.100 12.400 C-10.520 11.450 -12.050 10.020 -13 8.500 C-13.950 6.980 -14.530 4.880 -14.800 3.300 C-15.070 1.720 -14.900 0.270 -14.600 -1 C-14.300 -2.270 -13.720 -3.380 -13 -4.300 C-12.280 -5.220 -11.300 -5.920 -10.300 -6.500 C-9.300 -7.080 -8.220 -7.550 -7 -7.800 C-5.780 -8.050 -4.370 -8.130 -3 -8 C-1.630 -7.870 -0.020 -7.400 1.200 -7 C2.420 -6.600 3.470 -6.150 4.300 -5.600 C5.130 -5.050 5.750 -4.330 6.200 -3.700 C6.650 -3.070 6.930 -2.450 7 -1.800 C7.070 -1.150 6.870 -0.380 6.600 0.200 C6.330 0.780 5.920 1.300 5.400 1.700 C4.880 2.100 4.150 2.430 3.500 2.600 C2.850 2.770 2.130 2.800 1.500 2.700 C0.870 2.600 0 2.120 -0.300 2"/></g>
</svg>
<svg style="left:2730px;top:318px" width="48" height="48" viewBox="2730 318 48 48" fill="none" stroke="#ced0d6" stroke-width="3">
  <ellipse cx="2754.100" cy="330.800" rx="14.500" ry="5.600"/>
  <path d="M2739.600 330.800 L2739.600 353.100 A14.500 5.600 0 0 0 2768.600 353.100 L2768.600 330.800"/>
  <path d="M2739.600 338.200 A14.500 5.600 0 0 0 2768.600 338.200"/>
  <path d="M2739.600 345.600 A14.500 5.600 0 0 0 2768.600 345.600"/>
</svg>
</body>
</html>
